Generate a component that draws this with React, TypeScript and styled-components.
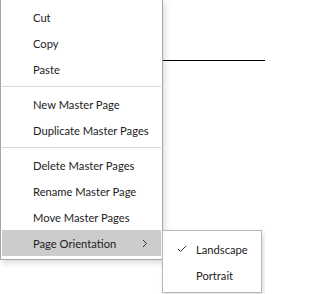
import React from "react";
import styled, { createGlobalStyle } from "styled-components";

const Global = createGlobalStyle`
  html, body { margin: 0; padding: 0; background: #fff; }
  body { font-family: "Segoe UI", Lato, "Noto Sans", sans-serif; }
`;

const Page = styled.div`
  position: relative;
  width: 265px;
  height: 294px;
  overflow: hidden;
  background: #fff;
`;

const Rule = styled.div`
  margin-top: 60px;
  border-top: 1px solid #000;
`;

const Menu = styled.div`
  position: absolute;
  left: 0;
  top: -1px;
  width: 163px;
  box-sizing: border-box;
  background: #fff;
  border: 1px solid #a3a6b0;
  padding: 4px 1px 3px;
  box-shadow: 2px 3px 6px rgba(0, 0, 0, 0.14);
  display: flex;
  flex-direction: column;
`;

const Item = styled.div<{ $active?: boolean }>`
  position: relative;
  height: 26px;
  display: flex;
  align-items: center;
  padding-left: 31px;
  font-size: 11.2px;
  color: #222;
  white-space: nowrap;
  background: ${(p) => (p.$active ? "#cccccc" : "transparent")};
`;

const Separator = styled.div`
  height: 1px;
  margin: 4px 0;
  background: #d9d9d9;
`;

const Chevron = styled.svg`
  position: absolute;
  left: 139px;
  top: 9px;
`;

const SubMenu = styled.div`
  position: absolute;
  left: 162px;
  top: 230px;
  width: 100px;
  box-sizing: border-box;
  background: #fff;
  border: 1px solid #b4b6bd;
  padding: 5px 1px 4px;
  box-shadow: 2px 3px 6px rgba(0, 0, 0, 0.14);
  display: flex;
  flex-direction: column;
`;

const SubItem = styled.div`
  height: 26px;
  display: flex;
  align-items: center;
  padding-left: 13px;
  font-size: 11.2px;
  color: #222;
  white-space: nowrap;
`;

const CheckSlot = styled.span`
  width: 19px;
  display: flex;
  align-items: center;
`;

export default function App() {
  return (
    <Page>
      <Global />
      <Rule />
      <Menu>
        <Item>Cut</Item>
        <Item>Copy</Item>
        <Item>Paste</Item>
        <Separator />
        <Item>New Master Page</Item>
        <Item>Duplicate Master Pages</Item>
        <Separator />
        <Item>Delete Master Pages</Item>
        <Item>Rename Master Page</Item>
        <Item>Move Master Pages</Item>
        <Item $active>
          Page Orientation
          <Chevron width="8" height="9" viewBox="0 0 8 9">
            <polyline points="2,1 5.5,4.5 2,8" fill="none" stroke="#333" strokeWidth="1" />
          </Chevron>
        </Item>
      </Menu>
      <SubMenu>
        <SubItem>
          <CheckSlot>
            <svg width="10" height="8" viewBox="0 0 10 8">
              <polyline points="1,4 3.5,6.5 9,1" fill="none" stroke="#333" strokeWidth="1" />
            </svg>
          </CheckSlot>
          Landscape
        </SubItem>
        <SubItem>
          <CheckSlot />
          Portrait
        </SubItem>
      </SubMenu>
    </Page>
  );
}
